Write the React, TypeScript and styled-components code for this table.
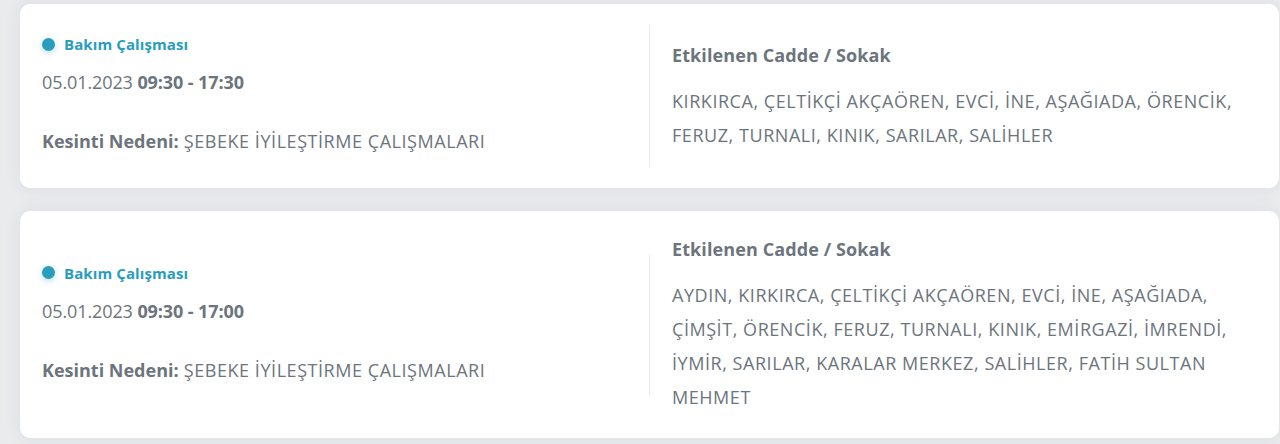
import React from "react";
import styled, { createGlobalStyle } from "styled-components";

const Global = createGlobalStyle`
  html, body { margin: 0; padding: 0; background: #e9ebed; }
  body { font-family: "Open Sans", "Noto Sans", sans-serif; -webkit-font-smoothing: antialiased; }
`;

const Page = styled.div`
  display: flex;
  flex-direction: column;
  gap: 23px;
  padding: 4px 1px 6px 20px;
  height: 444px;
  box-sizing: border-box;
  overflow: hidden;
`;

const Card = styled.div`
  display: flex;
  align-items: center;
  flex-shrink: 0;
  background: #ffffff;
  border-radius: 10px;
  padding: 21px 22px;
  box-shadow: 0 0 18px rgba(40, 60, 80, 0.07);
`;

const LeftCol = styled.div`
  flex: 0 0 608px;
  box-sizing: border-box;
  height: 142px;
  border-right: 1px solid #ececec;
  display: flex;
  flex-direction: column;
  padding-top: 9px;
`;

const Status = styled.div`
  display: flex;
  align-items: center;
  gap: 9px;
  height: 20px;
  color: #2a9dbd;
  font-weight: 700;
  font-size: 15px;
  letter-spacing: 0.1px;
`;

const Dot = styled.span`
  width: 13px;
  height: 13px;
  border-radius: 50%;
  background: #2a9dbd;
  box-shadow: 0 2px 6px rgba(42, 157, 189, 0.35);
`;

const DateLine = styled.div`
  margin-top: 16px;
  line-height: 24px;
  font-size: 18px;
  color: #6c757d;
  letter-spacing: -0.1px;
  b { font-weight: 700; }
`;

const Reason = styled.div`
  margin-top: 35px;
  line-height: 24px;
  font-size: 18px;
  color: #6c757d;
  letter-spacing: 0.55px;
  b { font-weight: 700; letter-spacing: 0; }
`;

const RightCol = styled.div`
  flex: 1;
  padding: 5px 0 3px 22px;
  font-family: "Open Sans", "Noto Sans", sans-serif;
  color: #6c757d;
`;

const Heading = styled.div`
  font-weight: 700;
  font-size: 18px;
  line-height: 24px;
  margin-bottom: 17px;
  letter-spacing: 0.1px;
`;

const Streets = styled.div`
  font-size: 18px;
  line-height: 34px;
  letter-spacing: 0.55px;
`;

type Item = { time: string; streets: string };

const items: Item[] = [
  {
    time: "09:30 - 17:30",
    streets:
      "KIRKIRCA, ÇELTİKÇİ AKÇAÖREN, EVCİ, İNE, AŞAĞIADA, ÖRENCİK, FERUZ, TURNALI, KINIK, SARILAR, SALİHLER",
  },
  {
    time: "09:30 - 17:00",
    streets:
      "AYDIN, KIRKIRCA, ÇELTİKÇİ AKÇAÖREN, EVCİ, İNE, AŞAĞIADA, ÇİMŞİT, ÖRENCİK, FERUZ, TURNALI, KINIK, EMİRGAZİ, İMRENDİ, İYMİR, SARILAR, KARALAR MERKEZ, SALİHLER, FATİH SULTAN MEHMET",
  },
];

export default function App() {
  return (
    <>
      <Global />
      <Page>
        {items.map((it, i) => (
          <Card key={i}>
            <LeftCol>
              <Status>
                <Dot />
                Bakım Çalışması
              </Status>
              <DateLine>
                05.01.2023 <b>{it.time}</b>
              </DateLine>
              <Reason>
                <b>Kesinti Nedeni:</b> ŞEBEKE İYİLEŞTİRME ÇALIŞMALARI
              </Reason>
            </LeftCol>
            <RightCol>
              <Heading>Etkilenen Cadde / Sokak</Heading>
              <Streets>{it.streets}</Streets>
            </RightCol>
          </Card>
        ))}
      </Page>
    </>
  );
}
